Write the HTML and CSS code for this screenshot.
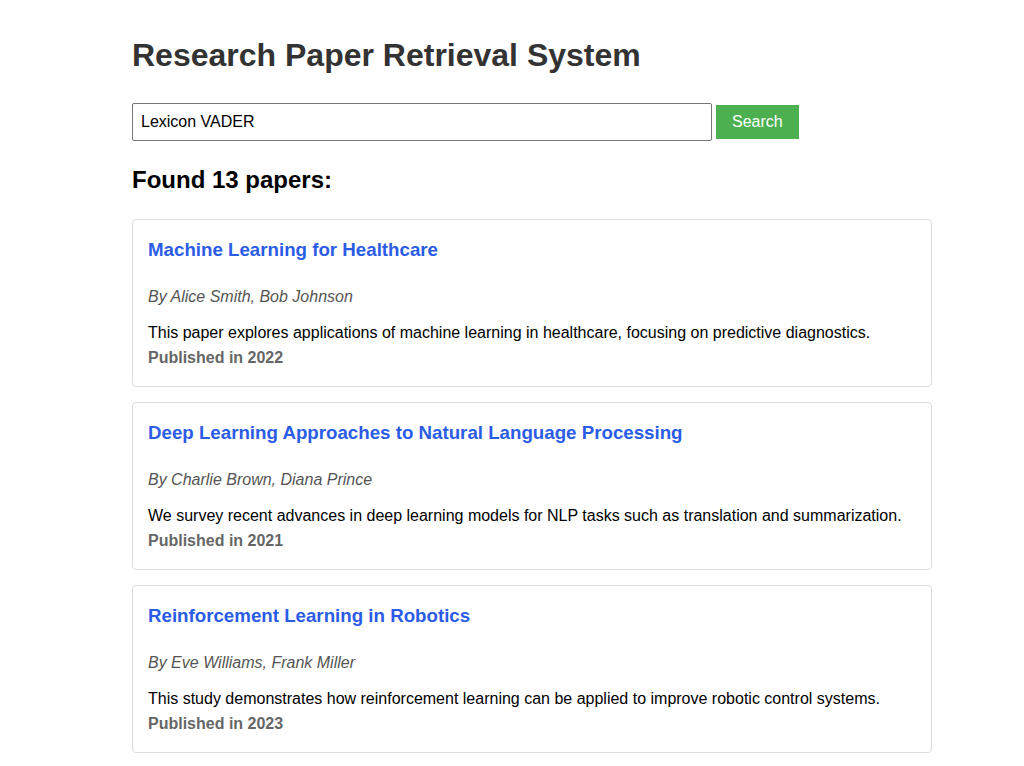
FILE: index.html
```html
<!DOCTYPE html>
<html>
<head>
<meta charset="utf-8">
<title>Research Paper Retrieval System</title>
<link rel="stylesheet" href="styles.css">
</head>
<body>
<div class="container">
  <h1 class="title">Research Paper Retrieval System</h1>
  <form class="search-form">
    <input class="search-input" type="text" value="Lexicon VADER">
    <button class="search-btn" type="button">Search</button>
  </form>
  <h2 class="results-count">Found 13 papers:</h2>
  <div class="results">
    <div class="paper">
      <h3 class="paper-title">Machine Learning for Healthcare</h3>
      <p class="paper-authors">By Alice Smith, Bob Johnson</p>
      <p class="paper-abstract">This paper explores applications of machine learning in healthcare, focusing on predictive diagnostics.</p>
      <p class="paper-year">Published in 2022</p>
    </div>
    <div class="paper">
      <h3 class="paper-title">Deep Learning Approaches to Natural Language Processing</h3>
      <p class="paper-authors">By Charlie Brown, Diana Prince</p>
      <p class="paper-abstract">We survey recent advances in deep learning models for NLP tasks such as translation and summarization.</p>
      <p class="paper-year">Published in 2021</p>
    </div>
    <div class="paper">
      <h3 class="paper-title">Reinforcement Learning in Robotics</h3>
      <p class="paper-authors">By Eve Williams, Frank Miller</p>
      <p class="paper-abstract">This study demonstrates how reinforcement learning can be applied to improve robotic control systems.</p>
      <p class="paper-year">Published in 2023</p>
    </div>
  </div>
</div>
</body>
</html>
```
FILE: styles.css
```css
html, body {
  margin: 0;
  padding: 0;
  background: #fff;
}
body {
  font-family: "Liberation Sans", Arial, sans-serif;
  color: #000;
  font-size: 16px;
}
.container {
  width: 800px;
  margin: 0 auto;
  padding: 37px 0 0 40px;
}
.title {
  font-size: 32px;
  font-weight: bold;
  color: #333;
  margin: 0 0 29px;
  line-height: 37px;
}
.search-form {
  margin: 0 0 25px;
  display: flex;
  align-items: center;
  gap: 4px;
}
.search-input {
  box-sizing: border-box;
  width: 580px;
  height: 38px;
  padding: 8px;
  border: 1px solid #767676;
  border-radius: 2px;
  font-family: "Liberation Sans", Arial, sans-serif;
  font-size: 16px;
  color: #000;
  outline: none;
}
.search-btn {
  height: 34px;
  padding: 0 16px;
  background: #4caf50;
  color: #fff;
  border: none;
  font-family: "Liberation Sans", Arial, sans-serif;
  font-size: 16px;
  cursor: pointer;
}
.results-count {
  font-size: 24px;
  font-weight: bold;
  margin: 0 0 25px;
  line-height: 28px;
}
.results {
  display: flex;
  flex-direction: column;
  gap: 15px;
}
.paper {
  border: 1px solid #ddd;
  border-radius: 4px;
  padding: 17px 15px 19px;
}
.paper-title {
  font-size: 18.72px;
  font-weight: bold;
  color: #2b5ce6;
  margin: 0 0 25px;
  line-height: 26px;
}
.paper-authors {
  font-style: italic;
  color: #555;
  margin: 0 0 18px;
  line-height: 18px;
}
.paper-abstract {
  margin: 0 0 7px;
  line-height: 18px;
}
.paper-year {
  font-weight: bold;
  color: #666;
  margin: 0;
  line-height: 18px;
}
```
